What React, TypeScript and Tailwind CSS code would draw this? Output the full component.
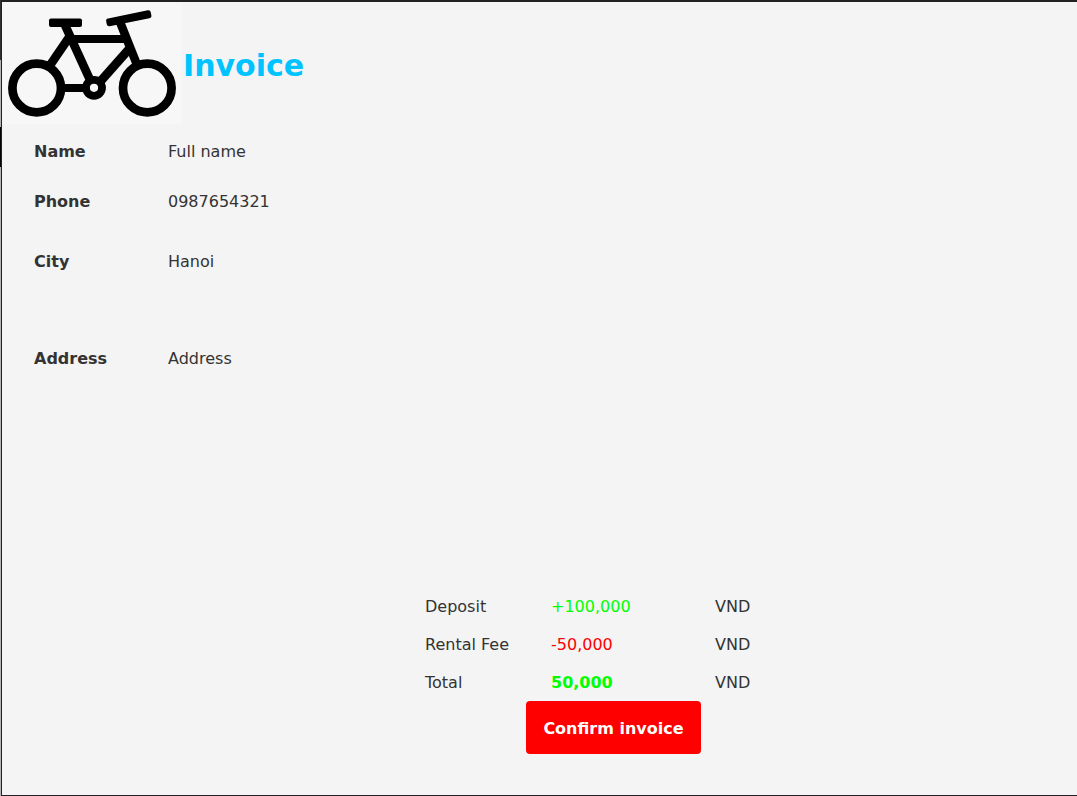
const details = [
  { label: 'Name', value: 'Full name' },
  { label: 'Phone', value: '0987654321' },
  { label: 'City', value: 'Hanoi' },
  { label: 'Address', value: 'Address' },
];

const charges = [
  { label: 'Deposit', amount: '+100,000', style: 'text-[#00ff00]' },
  { label: 'Rental Fee', amount: '-50,000', style: 'text-[#ff0000]' },
  { label: 'Total', amount: '50,000', style: 'font-bold text-[#00ff00]' },
];

function BikeLogo() {
  return (
    <svg
      width="180"
      height="122"
      viewBox="0 0 180 122"
      role="img"
      aria-label="Bicycle"
      className="shrink-0 bg-[#f7f7f7]"
      fill="none"
      stroke="#000"
      strokeWidth="8.7"
    >
      <circle cx="34.7" cy="86" r="24.3" />
      <circle cx="145.3" cy="86" r="24.3" />
      <circle cx="92" cy="85.8" r="8" strokeWidth="7.8" />
      <rect x="47" y="16.5" width="33" height="8.5" rx="2" fill="#000" stroke="none" />
      <rect
        x="104"
        y="12.3"
        width="45.5"
        height="8"
        rx="2.5"
        fill="#000"
        stroke="none"
        transform="rotate(-11.5 126.7 16.3)"
      />
      <path d="M62.5 22 89 80" />
      <path d="M66 37H125" strokeWidth="8" />
      <path d="M68 34 47.5 64" />
      <path d="M118 20 135.5 64" />
      <path d="M128 46 97 81" />
      <path d="M59 86H83" strokeWidth="8" />
    </svg>
  );
}

export default function App() {
  return (
    <div className="flex min-h-screen flex-col bg-[linear-gradient(to_bottom,#303030_60px,#b4b4b4_60px,#b4b4b4_127px,#050505_127px,#050505_167px,#b4b4b4_167px)] pl-px font-['DejaVu_Sans',sans-serif] text-base text-[#333333]">
      <main className="flex flex-1 flex-col border-t-2 border-b border-l border-[#232124] bg-[#f4f4f4]">
        <header className="flex items-center gap-px">
          <BikeLogo />
          <h1 className="pt-1 text-[30px] font-bold text-[#00c3ff]">Invoice</h1>
        </header>

        <dl className="mt-4 grid grid-cols-[134px_1fr] grid-rows-[50px_60px_97px_24px] pl-8">
          {details.map((item) => (
            <div key={item.label} className="contents">
              <dt className="font-bold">{item.label}</dt>
              <dd>{item.value}</dd>
            </div>
          ))}
        </dl>

        <section className="mt-auto flex pt-10 pb-[41px] pl-[423px]">
          <div className="flex flex-col items-start">
            <table>
              <tbody>
                {charges.map((charge) => (
                  <tr key={charge.label} className="h-[38px]">
                    <th scope="row" className="w-[126px] p-0 pt-0.5 text-left font-normal">
                      {charge.label}
                    </th>
                    <td className={`w-[164px] p-0 pt-0.5 ${charge.style}`}>{charge.amount}</td>
                    <td className="p-0 pt-0.5">VND</td>
                  </tr>
                ))}
              </tbody>
            </table>
            <button
              type="button"
              className="ml-[101px] h-[53px] min-w-[175px] rounded-[4px] bg-[#ff0000] px-4 pt-0.5 font-bold whitespace-nowrap text-white"
            >
              Confirm invoice
            </button>
          </div>
        </section>
      </main>
    </div>
  );
}
